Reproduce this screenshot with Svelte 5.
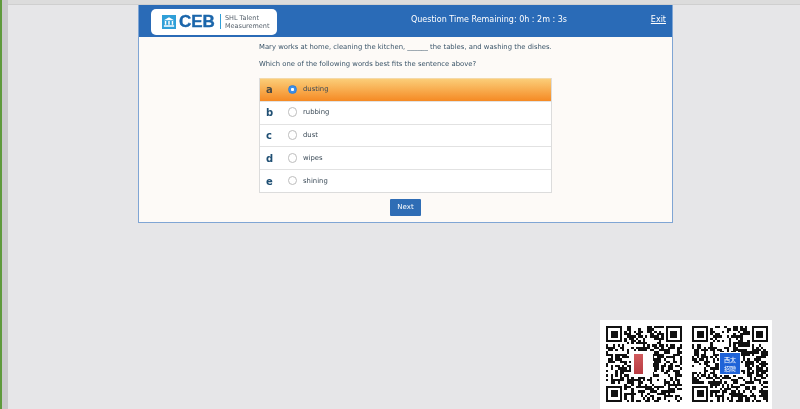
<script>
	const options = [
		{ key: 'a', label: 'dusting', selected: true },
		{ key: 'b', label: 'rubbing' },
		{ key: 'c', label: 'dust' },
		{ key: 'd', label: 'wipes' },
		{ key: 'e', label: 'shining' }
	];

	// qr-looking module grid, seeded so it stays the same between runs
	function qrPath(seed) {
		const n = 33;
		let s = seed;
		const rand = () => {
			s = (s * 1103515245 + 12345) & 0x7fffffff;
			return (s >> 12) / (0x7fffffff >> 12);
		};
		const inFinder = (x, y) =>
			(x < 8 && y < 8) || (x >= n - 8 && y < 8) || (x < 8 && y >= n - 8);
		let d = '';
		for (let y = 0; y < n; y++) {
			for (let x = 0; x < n; x++) {
				if (inFinder(x, y)) continue;
				if (rand() > 0.5) d += `M${x} ${y}h1v1h-1z`;
			}
		}
		const finder = (x, y) =>
			`M${x} ${y}h7v7h-7zM${x + 1} ${y + 1}v5h5v-5zM${x + 2} ${y + 2}h3v3h-3z`;
		return d + finder(0, 0) + finder(n - 7, 0) + finder(0, n - 7);
	}
</script>

<div class="page">
	<div class="strip"></div>
	<div class="main">
		<div class="topbar"></div>
		<div class="panel">
			<header class="head">
				<div class="logo">
					<svg class="bank" viewBox="0 0 15 15" width="14" height="14">
						<rect width="15" height="15" fill="#2f9fd8" />
						<path d="M7.5 2.5 L13 5.5 H2 Z M3 6.5h1.6v4H3z M6.7 6.5h1.6v4H6.7z M10.4 6.5H12v4h-1.6z M2 11h11v1.5H2z" fill="#fff" />
					</svg>
					<span class="ceb">CEB</span>
					<span class="rule"></span>
					<span class="shl">SHL Talent<br />Measurement</span>
				</div>
				<div class="timer">Question Time Remaining: 0h : 2m : 3s</div>
				<span class="exit">Exit</span>
			</header>
			<div class="body">
				<div class="col">
					<p class="q first">Mary works at home, cleaning the kitchen, ______ the tables, and washing the dishes.</p>
					<p class="q second">Which one of the following words best fits the sentence above?</p>
					<div class="list">
						{#each options as o}
							<div class="row" class:on={o.selected}>
								<span class="key">{o.key}</span>
								<span class="radio"></span>
								<span class="label">{o.label}</span>
							</div>
						{/each}
					</div>
					<div class="actions"><span class="next">Next</span></div>
				</div>
			</div>
		</div>
	</div>
</div>

<div class="qrs">
	<div class="qr">
		<svg viewBox="0 0 33 33" width="76" height="76" shape-rendering="crispEdges">
			<path d={qrPath(71)} fill="#111" fill-rule="evenodd" />
		</svg>
		<div class="badge red"><span class="seal"></span></div>
	</div>
	<div class="qr">
		<svg viewBox="0 0 33 33" width="76" height="76" shape-rendering="crispEdges">
			<path d={qrPath(2024)} fill="#111" fill-rule="evenodd" />
		</svg>
		<div class="badge blue">西太<br />招聘</div>
	</div>
</div>

<style>
	:global(body) {
		margin: 0;
		background: #e6e6e8;
	}
	.page {
		display: flex;
		height: 409px;
		overflow: hidden;
		font-family: 'DejaVu Sans', Verdana, sans-serif;
		filter: blur(0.3px);
	}
	.strip {
		width: 8px;
		flex-shrink: 0;
		background: linear-gradient(90deg, #5f9a3c 0 2px, #c9c9ca 2px 8px);
	}
	.main {
		flex: 1;
		display: flex;
		flex-direction: column;
	}
	.topbar {
		height: 4px;
		background: #dcdcdc;
		border-bottom: 1px solid #cfcfcf;
	}
	.panel {
		width: 533px;
		margin-left: 130px;
		border: 1px solid #7fa5d4;
		border-top: 0;
		background: #fdfaf7;
	}
	.head {
		height: 32px;
		background: #2a6bb7;
		display: flex;
		align-items: center;
		color: #fff;
	}
	.logo {
		width: 126px;
		height: 26px;
		margin-left: 12px;
		margin-top: 1px;
		background: #fff;
		border-radius: 5px;
		display: flex;
		align-items: center;
		padding-left: 11px;
		box-sizing: border-box;
		flex-shrink: 0;
	}
	.ceb {
		font-family: 'Liberation Sans', Arial, sans-serif;
		font-weight: 700;
		font-size: 17px;
		-webkit-text-stroke: 0.4px #1b66ab;
		color: #1b66ab;
		margin-left: 3px;
	}
	.rule {
		width: 1px;
		height: 15px;
		background: #2f9fd8;
		margin: 0 4px 0 5px;
	}
	.shl {
		font-size: 6.5px;
		line-height: 8px;
		color: #55606b;
		white-space: nowrap;
	}
	.timer {
		font-size: 8px;
		margin-left: 134px;
		margin-bottom: 4px;
		white-space: nowrap;
	}
	.exit {
		margin-left: auto;
		margin-right: 6px;
		margin-bottom: 4px;
		font-size: 8px;
		text-decoration: underline;
	}
	.body {
		height: 185px;
		display: flex;
		justify-content: center;
		box-sizing: border-box;
	}
	.col {
		width: 293px;
	}
	.q {
		margin: 0;
		font-size: 6.85px;
		line-height: 10px;
		color: #3a5468;
		white-space: nowrap;
	}
	.first {
		margin-top: 5px;
	}
	.second {
		margin-top: 7px;
	}
	.list {
		margin-top: 9px;
		border: 1px solid #dcdcdc;
		border-top: 0;
		background: #fff;
	}
	.row {
		height: 21.8px;
		display: flex;
		align-items: center;
		border-top: 1px solid #e2e2e2;
		font-size: 6.85px;
		color: #3b4a57;
	}
	.row.on {
		background: linear-gradient(#fbcd78, #f58a24);
		border-top-color: #f4d9a8;
	}
	.key {
		width: 22.5px;
		margin-left: 6px;
		font-size: 10px;
		font-weight: 700;
		color: #1f4f73;
	}
	.on .key {
		color: #4a4a44;
	}
	.radio {
		width: 7.5px;
		height: 7.5px;
		border-radius: 50%;
		border: 1px solid #bdbdbd;
		background: #fff;
		margin-right: 6px;
		margin-left: -1px;
		margin-top: -1px;
	}
	.on .radio {
		border-color: #2f7fd9;
		background: radial-gradient(#fff 0 1.3px, #3d8fe8 1.8px);
	}
	.label {
		margin-top: -1px;
	}
	.actions {
		display: flex;
		justify-content: center;
		margin-top: 6px;
	}
	.next {
		width: 31px;
		height: 17px;
		line-height: 17px;
		text-align: center;
		background: #2f6db5;
		border-radius: 1px;
		color: #fff;
		font-size: 7px;
	}
	.qrs {
		position: absolute;
		left: 600px;
		top: 320px;
		width: 172px;
		height: 89px;
		background: #fff;
		display: flex;
		gap: 10px;
		padding: 6px 4px 0 6px;
		box-sizing: border-box;
		filter: blur(0.5px);
	}
	.qr {
		position: relative;
		width: 76px;
		height: 76px;
	}
	.qr svg {
		display: block;
	}
	.badge {
		position: absolute;
		display: flex;
		align-items: center;
		justify-content: center;
		text-align: center;
		box-sizing: border-box;
	}
	.badge.red {
		left: 25px;
		top: 25px;
		width: 22px;
		height: 26px;
		background: #fff;
		justify-content: flex-start;
		padding-left: 3px;
	}
	.seal {
		width: 9px;
		height: 20px;
		background: linear-gradient(#d05a5c, #b93c42);
	}
	.badge.blue {
		left: 27px;
		top: 26px;
		width: 22px;
		height: 23px;
		background: #1f63d8;
		border: 1px solid #fff;
		color: #fff;
		font-family: 'Noto Sans CJK SC', sans-serif;
		font-size: 6px;
		line-height: 9px;
	}
</style>
